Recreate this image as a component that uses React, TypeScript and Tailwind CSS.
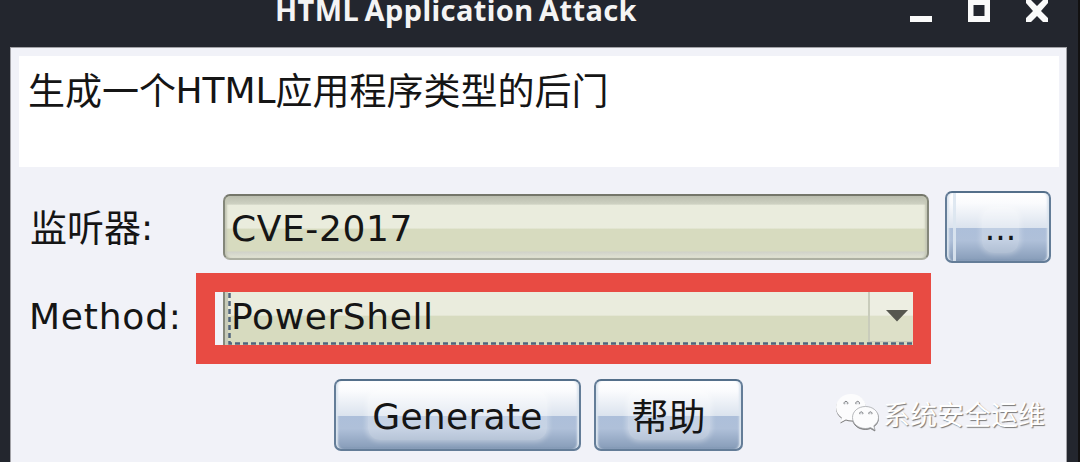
import type { ReactNode } from "react";

const uiFont = "font-['DejaVu_Sans','Noto_Sans_CJK_SC',sans-serif]";
const cjkFont = "font-['Noto_Sans_CJK_SC',sans-serif]";

function TitleBar() {
  return (
    <header className="relative flex h-[47px] w-full shrink-0 text-[#f4f4f4]">
      <h1 className="ml-[275px] h-[31px] w-[361px] whitespace-nowrap font-['Noto_Sans',sans-serif] text-[29px] font-bold leading-[20px] tracking-[0.4px] [word-spacing:-2.5px]">
        HTML Application Attack
      </h1>
      <div className="ml-[274px] flex h-[22px] items-end gap-[36px]">
        <button aria-label="Minimize" className="h-[22px] w-[22px]">
          <svg width="22" height="22" viewBox="0 0 22 22"><path d="M0 16h22v6H0z" fill="#fafafa" /></svg>
        </button>
        <button aria-label="Maximize" className="h-[22px] w-[22px]">
          <svg width="22" height="22" viewBox="0 0 22 22"><path d="M0-1h22v23H0zM5.500 5v11h11V5z" fill="#fafafa" fillRule="evenodd" /></svg>
        </button>
        <button aria-label="Close" className="h-[22px] w-[22px]">
          <svg width="22" height="22" viewBox="0 0 22 22"><path d="M0 0h5l6 6 6-6h5v3l-7 8 7 7v4h-5l-6-6-6 6H0v-4l7-7-7-8z" fill="#fafafa" /></svg>
        </button>
      </div>
    </header>
  );
}

function PushButton({ className, split, children }: { className: string; split?: boolean; children: ReactNode }) {
  return (
    <button
      className={`flex h-[72px] shrink-0 justify-center rounded-[7px] border-2 border-[#647d98] border-t-[#546f8a] bg-[linear-gradient(180deg,#ffffff_0%,#fafbfd_15%,#dbe3ee_51%,#adbfda_52%,#afc0d9_70%,#8a9fbb_97%,#7890ad_100%)] shadow-[inset_3px_0_2px_-1px_#dce5ef,inset_-3px_0_2px_-1px_#dce5ef] ${className}`}
    >
      {split && <span className="ml-[5px] mr-[26px] h-full w-[3px] shrink-0 bg-[#dce5ef]/90" />}
      {children}
    </button>
  );
}

function WeChatMark() {
  return (
    <svg width="46" height="40" viewBox="0 0 46 40" className="shrink-0 drop-shadow-[0.5px_1px_0.5px_#777777]">
      <path d="M16 1C7.300 1 1 7 1 14.300c0 4.300 2.200 7.900 5.800 10.400L5.300 29.500l5.600-2.900c2 .7 4.500.9 6.600.8 C31 26 31 20 31 14.300 31 7 24.500 1 16 1z" fill="#fcfcfd" />
      <path d="M30.500 13.500c-7.300 0-13 4.800-13 11s5.700 11 13 11c1.800 0 3.400-.3 5-.9l4.500 2.400-1.200-4.200c2.900-2 4.700-5 4.700-8.300 0-6.200-5.700-11-13-11z" fill="#fcfcfd" stroke="#a5a7ab" strokeWidth=".8" />
      <path d="M9.300 11.200a1.900 1.900 0 1 1 3.300 0M21 11.200a1.900 1.900 0 1 1 3.300 0M24.900 21.200a1.600 1.600 0 1 1 2.800 0M34 21.200a1.600 1.600 0 1 1 2.800 0" fill="#e1e3e7" stroke="#7c7e81" strokeWidth="1" />
    </svg>
  );
}

export default function App() {
  return (
    <div className={`relative flex h-[462px] w-[1080px] flex-col overflow-hidden border-r-2 border-[#121111] bg-[#23262e] text-[#151515] ${uiFont}`}>
      <TitleBar />
      <main className="ml-[10px] flex h-[415px] w-[1057px] flex-col border border-b-0 border-[#a2a2a7] bg-[#f1f2f8]">
        <section className="ml-[8px] mt-[8px] h-[111px] w-[1040px] shrink-0 bg-white pl-[9px] pt-[10px]">
          <p className="flex h-[50px] whitespace-nowrap leading-[50px]">
            <span className={`-mt-[2px] w-[147.500px] text-[37px] ${cjkFont}`}>生成一个</span>
            <span className="w-[100px] text-[36px]">HTML</span>
            <span className={`-mt-[2px] text-[37px] ${cjkFont}`}>应用程序类型的后门</span>
          </p>
        </section>

        <div className="mt-[24px] flex h-[72px] shrink-0 items-center">
          <label className="ml-[19px] flex w-[193px] whitespace-nowrap leading-[50px]">
            <span className={`text-[37px] ${cjkFont}`}>监听器</span>
            <span className="pt-[2px] text-[36px]">:</span>
          </label>
          <div className="-mt-[1px] flex h-[66px] w-[706px] items-center rounded-[7px] border-2 border-[#84877a] border-b-[#adb0a2] border-t-[#74766a] bg-[linear-gradient(180deg,#babdae_0%,#ced1c2_13%,#eaecdd_15%,#eaecdd_52%,#d7dbbf_53%,#d7dbbf_89%,#d0d2c9_90%,#e1e3d3_100%)] pl-[6px] text-[36px] shadow-[inset_3px_0_2px_-1px_#c5c8b6,inset_-3px_0_2px_-1px_#c5c8b6]">
            <span className="pt-[4px] leading-[50px] tracking-[0.6px]">CVE-2017</span>
          </div>
          <PushButton className="ml-[16px] w-[106px] pr-[29px]" split>
            <span className="mt-[14px] h-[46px] rounded-xl bg-white/25 px-[3px] text-[33px] leading-[44px] shadow-[0_0_5px_2px_#ffffff40]">...</span>
          </PushButton>
        </div>

        <div className="mt-[10px] flex h-[91px] shrink-0 items-center">
          <label className="-mt-[3px] ml-[18px] w-[167px] whitespace-nowrap text-[36px] leading-[50px] tracking-[0.8px]">Method:</label>
          <div className="h-[91px] w-[735px] border-[19px] border-r-[18px] border-[#e84b43]">
            <div className="flex h-full w-full bg-[#f1f2f8] pl-[8px]">
              <div className="relative flex min-w-0 flex-1 items-center border-l-2 border-[#85887b] bg-[linear-gradient(180deg,#eaecdd_0%,#eaecdd_44%,#d7dbbf_45%,#d7dbbf_100%)]">
                <div className="h-full w-[3px] bg-[#c8cbb9]" />
                <svg width="688" height="53" viewBox="0 0 688 53" className="pointer-events-none absolute left-0 top-0">
                  <path d="M4.500 1v50.500H688" fill="none" stroke="#50647c" strokeWidth="2.500" strokeDasharray="5 3" />
                </svg>
                <span className="-mt-[4px] ml-[3px] flex-1 whitespace-nowrap text-[36px] leading-[50px] tracking-[0.6px]">PowerShell</span>
                <div className="mb-[3px] flex h-[50px] w-[45px] items-center justify-end border-b border-l-2 border-[#c9ccbb] bg-white/15 pr-[5px]">
                  <svg width="22" height="12" viewBox="0 0 22 12" className="-mt-[1px]">
                    <path d="M0 0h22L11 11.500z" fill="#56574f" />
                  </svg>
                </div>
              </div>
            </div>
          </div>
        </div>

        <div className="ml-[323px] mt-[15px] flex gap-[13px]">
          <PushButton className="w-[247px]">
            <span className="mt-[9px] h-[50px] rounded-xl bg-white/30 px-1 text-[36px] leading-[54px] tracking-[0.3px] shadow-[0_0_5px_2px_#ffffff4d]">Generate</span>
          </PushButton>
          <PushButton className="w-[149px]">
            <span className={`mt-[9px] h-[50px] rounded-xl bg-white/30 px-1 text-[37px] leading-[50px] shadow-[0_0_5px_2px_#ffffff4d] ${cjkFont}`}>帮助</span>
          </PushButton>
        </div>
      </main>
      <aside className="absolute left-[835px] top-[393px] flex items-start">
        <WeChatMark />
        <span className={`ml-[2px] whitespace-nowrap text-[27px] leading-[41px] text-white [text-shadow:1px_1px_1px_#777777] ${cjkFont}`}>系统安全运维</span>
      </aside>
    </div>
  );
}
